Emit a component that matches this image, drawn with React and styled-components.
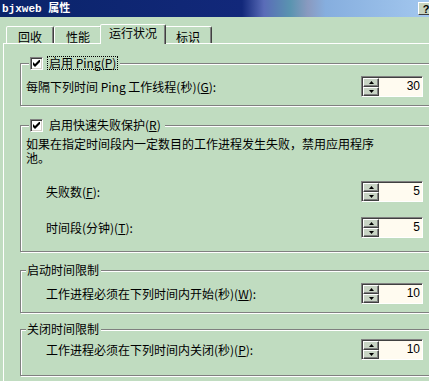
import React from 'react';
import styled, { createGlobalStyle } from 'styled-components';

const FONT = `"Noto Sans CJK SC", "Liberation Sans", sans-serif`;
const FACE = '#c0dcc0';

const Global = createGlobalStyle`
  html, body { margin: 0; padding: 0; overflow: hidden; background: ${FACE}; }
  body { width: 429px; height: 381px; }
  #root { width: 429px; height: 381px; overflow: hidden; }
`;

const Window = styled.div`
  width: 440px;
  height: 381px;
  background: ${FACE};
  font-family: ${FONT};
  font-size: 12px;
  line-height: 14px;
  color: #000;
  display: flex;
  flex-direction: column;
`;

const TitleBar = styled.div`
  height: 17px;
  flex: none;
  display: flex;
  align-items: center;
  justify-content: space-between;
  padding: 0 6px 0 2px;
  background: linear-gradient(
    to right,
    #0a246a 0%,
    #12287a 55%,
    #5a6cb8 60%,
    #5a94b0 66%,
    #8a9ac0 70%,
    #86aede 74%,
    #a6caf0 100%
  );
`;

const Title = styled.span`
  color: #fff;
  font-weight: bold;
  font-family: "Liberation Mono", "Noto Sans CJK SC", monospace;
  font-size: 11px;
  white-space: pre;
`;

const HelpButton = styled.div`
  width: 16px;
  height: 13px;
  box-sizing: border-box;
  border: 1px solid;
  border-color: #fff #404040 #404040 #fff;
  background: #c8d4c0;
  font: bold 11px "Liberation Sans", sans-serif;
  display: flex;
  align-items: center;
  justify-content: center;
`;

const Body = styled.div`
  flex: 1;
  display: flex;
  flex-direction: column;
  padding: 7px 2px 0 3px;
`;

const TabStrip = styled.div`
  display: flex;
  align-items: flex-start;
  height: 19px;
  padding-left: 3px;
  position: relative;
  z-index: 1;
`;

const Tab = styled.div`
  box-sizing: border-box;
  width: ${(p) => p.$w}px;
  height: ${(p) => (p.$active ? 20 : 17)}px;
  margin: ${(p) => (p.$active ? '0 -2px' : '2px 0 0')};
  border: 1px solid;
  border-bottom: none;
  border-color: #fff #404040 transparent #fff;
  border-radius: 2px 2px 0 0;
  box-shadow: inset -1px 0 #808080;
  background: ${FACE};
  position: relative;
  z-index: ${(p) => (p.$active ? 2 : 0)};
  display: flex;
  justify-content: center;
  padding-top: ${(p) => (p.$active ? 1 : 3)}px;
  white-space: nowrap;
`;

const Panel = styled.div`
  flex: 1;
  border-top: 1px solid #fff;
  border-left: 1px solid #fff;
  padding: 12px 8px 0 16px;
  display: flex;
  flex-direction: column;
`;

const Group = styled.fieldset`
  margin: ${(p) => p.$mt}px 0 0;
  padding: 0 6px ${(p) => p.$pb}px 5px;
  border: 1px solid #808080;
  box-shadow: inset 1px 1px #fff, 1px 1px #fff;
  min-width: 0;
`;

const Legend = styled.legend`
  margin-left: ${(p) => p.$ml}px;
  padding: 0 2px 0 1px;
  height: 14px;
  line-height: 14px;
  background: ${FACE};
  display: flex;
  align-items: center;
  gap: 4px;
  white-space: nowrap;
`;

const CheckBox = styled.span`
  width: 13px;
  height: 13px;
  box-sizing: border-box;
  border: 1px solid;
  border-color: #808080 #fff #fff #808080;
  box-shadow: inset 1px 1px #404040, inset -1px -1px #d4d0c8;
  background: #fff;
  display: flex;
  align-items: center;
  justify-content: center;
`;

const CheckLabel = styled.span`
  border: 1px dotted ${(p) => (p.$focus ? '#000' : 'transparent')};
  padding: 0 1px;
  line-height: 12px;
`;

const Row = styled.div`
  display: flex;
  align-items: center;
  justify-content: space-between;
  height: 21px;
  margin-top: ${(p) => p.$mt}px;
  padding-left: ${(p) => p.$indent || 0}px;
`;

const Paragraph = styled.div`
  margin-top: ${(p) => p.$mt}px;
  max-width: 356px;
  line-height: 14px;
`;

const Spinner = styled.div`
  width: 62px;
  height: 21px;
  box-sizing: border-box;
  border: 1px solid;
  border-color: #808080 #fff #fff #808080;
  box-shadow: inset 1px 1px #404040;
  background: #fffbf0;
  display: flex;
  flex: none;
`;

const SpinButtons = styled.div`
  width: 16px;
  display: flex;
  flex-direction: column;
  padding: 1px 0 0 1px;
`;

const SpinButton = styled.div`
  flex: 1;
  box-sizing: border-box;
  border: 1px solid;
  border-color: #fff #404040 #404040 #fff;
  box-shadow: inset -1px -1px #808080;
  background: #c8d4c4;
  display: flex;
  align-items: center;
  justify-content: center;
`;

const SpinValue = styled.div`
  flex: 1;
  text-align: right;
  padding-right: 2px;
  font-family: "Liberation Sans", sans-serif;
  font-size: 12px;
  line-height: 19px;
`;

const Arrow = ({ up }) => (
  <svg width="5" height="3" viewBox="0 0 5 3">
    <path d={up ? 'M2.5 0 L5 3 L0 3 Z' : 'M0 0 L5 0 L2.5 3 Z'} fill="#000" />
  </svg>
);

const Check = () => (
  <svg width="7" height="7" viewBox="0 0 7 7">
    <path d="M0 2 L2 4 L6 0 L7 0 L7 2 L2 7 L0 5 Z" fill="#000" />
  </svg>
);

const Spin = ({ value }) => (
  <Spinner>
    <SpinButtons>
      <SpinButton>
        <Arrow up />
      </SpinButton>
      <SpinButton>
        <Arrow />
      </SpinButton>
    </SpinButtons>
    <SpinValue>{value}</SpinValue>
  </Spinner>
);

const tabs = [
  { label: '回收', w: 48 },
  { label: '性能', w: 48 },
  { label: '运行状况', w: 66, active: true },
  { label: '标识', w: 48 },
];

export default function App() {
  return (
    <>
      <Global />
      <Window>
        <TitleBar>
          <Title>bjxweb 属性</Title>
          <HelpButton>?</HelpButton>
        </TitleBar>
        <Body>
          <TabStrip>
            {tabs.map((t) => (
              <Tab key={t.label} $w={t.w} $active={t.active}>
                {t.label}
              </Tab>
            ))}
          </TabStrip>
          <Panel>
            <Group $mt={0} $pb={8}>
              <Legend $ml={3}>
                <CheckBox>
                  <Check />
                </CheckBox>
                <CheckLabel $focus>
                  启用 Ping(<u>P</u>)
                </CheckLabel>
              </Legend>
              <Row $mt={6}>
                <span>
                  每隔下列时间 Ping 工作线程(秒)(<u>G</u>):
                </span>
                <Spin value="30" />
              </Row>
            </Group>

            <Group $mt={12} $pb={13}>
              <Legend $ml={3}>
                <CheckBox>
                  <Check />
                </CheckBox>
                <CheckLabel>
                  启用快速失败保护(<u>R</u>)
                </CheckLabel>
              </Legend>
              <Paragraph $mt={5}>
                如果在指定时间段内一定数目的工作进程发生失败，禁用应用程序池。
              </Paragraph>
              <Row $mt={16} $indent={20}>
                <span>
                  失败数(<u>F</u>):
                </span>
                <Spin value="5" />
              </Row>
              <Row $mt={15} $indent={20}>
                <span>
                  时间段(分钟)(<u>T</u>):
                </span>
                <Spin value="5" />
              </Row>
            </Group>

            <Group $mt={11} $pb={8}>
              <Legend $ml={0}>启动时间限制</Legend>
              <Row $mt={6} $indent={20}>
                <span>
                  工作进程必须在下列时间内开始(秒)(<u>W</u>):
                </span>
                <Spin value="10" />
              </Row>
            </Group>

            <Group $mt={9} $pb={15}>
              <Legend $ml={0}>关闭时间限制</Legend>
              <Row $mt={3} $indent={20}>
                <span>
                  工作进程必须在下列时间内关闭(秒)(<u>P</u>):
                </span>
                <Spin value="10" />
              </Row>
            </Group>
          </Panel>
        </Body>
      </Window>
    </>
  );
}
